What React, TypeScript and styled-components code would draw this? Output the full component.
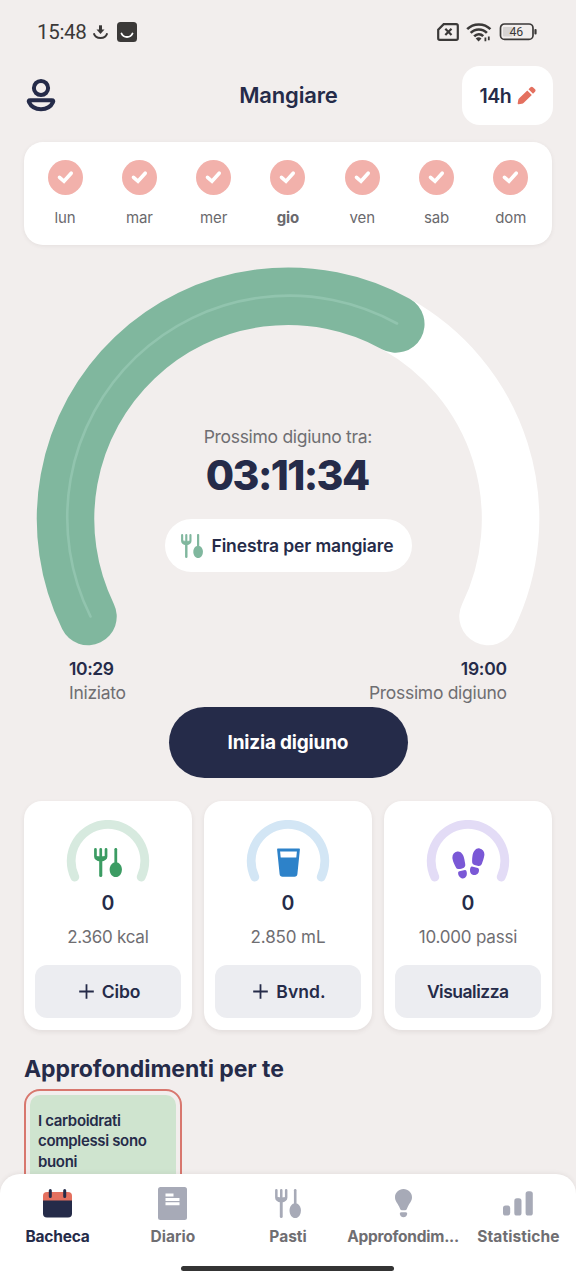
import React from 'react';
import styled, { createGlobalStyle } from 'styled-components';

const ink = '#252b49';
const muted = '#6f6e72';
const sand = '#f2eeed';

const GlobalStyle = createGlobalStyle`
  * { box-sizing: border-box; }
  body { margin: 0; background: ${sand}; font-family: Inter, "Open Sans", sans-serif; }
  svg { display: block; flex: none; }
`;

const Screen = styled.div`
  width: 576px;
  height: 1280px;
  display: flex;
  flex-direction: column;
  overflow: hidden;
  background: ${sand};
`;

const Text = styled.span<{ $size: number; $weight?: number; $color?: string; $track?: number; $line?: number }>`
  display: block;
  white-space: nowrap;
  font-size: ${p => p.$size}px;
  font-weight: ${p => p.$weight ?? 400};
  color: ${p => p.$color ?? ink};
  letter-spacing: ${p => p.$track ?? 0}px;
  margin-right: ${p => -(p.$track ?? 0)}px;
  line-height: ${p => p.$line ?? 24}px;
`;

const StatusBar = styled.div`
  flex: none;
  height: 64px;
  padding: 0 39px 0 37px;
  display: flex;
  align-items: center;
  justify-content: space-between;
`;
const StatusGroup = styled.div<{ $gap: number }>`
  display: flex;
  align-items: center;
  gap: ${p => p.$gap}px;
`;
const Clock = styled.span`
  font-family: Roboto, sans-serif;
  font-size: 20.5px;
  letter-spacing: -0.3px;
  color: #3b3938;
`;

const Header = styled.header`
  flex: none;
  height: 61px;
  padding: 2px 23px 0 26px;
  display: grid;
  grid-template-columns: 91px 1fr 91px;
  align-items: center;
`;
const ProfileButton = styled.div`
  margin-top: -1px;
`;
const Title = styled.h1`
  margin: 0 2px 2px 0;
  display: flex;
  justify-content: center;
`;
const GoalChip = styled.button`
  height: 59px;
  border: 0;
  padding: 0;
  border-radius: 18px;
  background: #fff;
  display: flex;
  align-items: center;
  justify-content: center;
  gap: 5px;
  font-family: inherit;
`;

const Content = styled.main`
  flex: 1;
  min-height: 0;
  overflow: hidden;
  padding: 17px 24px 0;
`;

const Week = styled.section`
  height: 103px;
  padding: 18px 4px 0;
  border-radius: 19px;
  background: #fff;
  box-shadow: 0 1px 4px rgba(80, 60, 60, 0.08);
  display: grid;
  grid-template-columns: repeat(7, 1fr);
`;
const Day = styled.div`
  display: flex;
  flex-direction: column;
  align-items: center;
  gap: 11px;
`;

const Gauge = styled.section`
  margin-top: 22px;
  height: 379px;
  display: grid;
  justify-items: center;
  > * { grid-area: 1 / 1; }
`;
const GaugeBody = styled.div`
  padding-top: 158px;
  display: flex;
  flex-direction: column;
  align-items: center;
`;
const WindowPill = styled.div`
  margin-top: 17px;
  width: 247px;
  height: 53px;
  padding-right: 2px;
  border-radius: 27px;
  background: #fff;
  display: flex;
  align-items: center;
  justify-content: center;
  gap: 9px;
`;

const Times = styled.div`
  display: flex;
  justify-content: space-between;
  padding: 11px 45px 0;
  height: 61px;
`;
const TimeBlock = styled.div<{ $end?: boolean }>`
  display: flex;
  flex-direction: column;
  align-items: ${p => (p.$end ? 'flex-end' : 'flex-start')};
`;

const StartButton = styled.button`
  display: flex;
  align-items: center;
  justify-content: center;
  margin: 0 auto;
  width: 239px;
  height: 71px;
  padding: 1px 0 0;
  border: 0;
  border-radius: 36px;
  background: ${ink};
  font-family: inherit;
`;

const Trackers = styled.section`
  margin-top: 23px;
  display: grid;
  grid-template-columns: repeat(3, 1fr);
  gap: 12px;
`;
const TrackerCard = styled.article`
  height: 229px;
  padding: 19px 11px 12px;
  border-radius: 18px;
  background: #fff;
  box-shadow: 0 2px 5px rgba(80, 60, 60, 0.09);
  display: flex;
  flex-direction: column;
  align-items: center;
`;
const TrackerDial = styled.div`
  display: grid;
  justify-items: center;
  height: 63px;
  margin-bottom: 8px;
  > * { grid-area: 1 / 1; }
`;
const DialIcon = styled.div`
  padding-top: 28px;
`;
const TrackerAction = styled.button<{ $offset: number }>`
  margin-top: auto;
  align-self: stretch;
  height: 53px;
  border: 0;
  padding: 0 0 0 ${p => p.$offset}px;
  border-radius: 12px;
  background: #ecedf1;
  display: flex;
  align-items: center;
  justify-content: center;
  gap: 8px;
  font-family: inherit;
`;

const SectionTitle = styled.h2`
  margin: 26px 0 0;
  display: flex;
`;
const StoryFrame = styled.article`
  margin-top: 7px;
  width: 158px;
  height: 200px;
  padding: 4px;
  border: 2px solid #d8776e;
  border-radius: 16px;
`;
const StoryCard = styled.div`
  height: 100%;
  padding: 16px 8px;
  border-radius: 10px;
  background: #cfe4cf;
`;

const BottomNav = styled.nav`
  flex: none;
  height: 106px;
  background: #fff;
  border-radius: 20px 20px 0 0;
  box-shadow: 0 -1px 4px rgba(80, 60, 60, 0.08);
  display: flex;
  flex-direction: column;
  align-items: center;
`;
const Tabs = styled.div`
  width: 100%;
  height: 92px;
  display: grid;
  grid-template-columns: repeat(5, 1fr);
`;
const Tab = styled.div`
  min-width: 0;
  display: flex;
  flex-direction: column;
  align-items: center;
`;
const TabIcon = styled.div`
  height: 51px;
  padding-top: 8px;
  display: flex;
  align-items: center;
`;
const HomeBar = styled.div`
  width: 213px;
  height: 5px;
  margin-right: 1px;
  border-radius: 3px;
  background: #343434;
`;

const Cutlery = ({ color, width, height }: { color: string; width: number; height: number }) => (
  <svg width={width} height={height} viewBox="0 0 27 29" preserveAspectRatio="none" fill="none" stroke={color} strokeLinecap="round">
    <path d="M1.4 1.3V8.5Q1.4 11.6 6.5 12.2Q11.6 11.6 11.6 8.5V1.3M6.5 1.3V12" strokeWidth="2.6" />
    <path d="M1.6 8.6Q2 11.5 6.5 11.7Q11 11.5 11.4 8.6L6.5 9Z" fill={color} strokeWidth="1" />
    <path d="M6.5 11V27.5" strokeWidth="3" />
    <path d="M21 1.3V17" strokeWidth="2.7" />
    <path d="M21 14.2C24.4 14.2 26.9 17.6 26.9 21.4C26.9 25.6 24.4 29 21 29C17.6 29 15.1 25.6 15.1 21.4C15.1 17.6 17.6 14.2 21 14.2Z" fill={color} stroke="none" />
  </svg>
);

const Glass = () => (
  <svg width="23" height="29" viewBox="0 0 23 29">
    <path fillRule="evenodd" fill="#2d82c9" d="M.8 .5H22.2Q23 .5 22.9 1.4L20.4 26Q20.1 28.8 17.5 28.8H5.5Q2.9 28.8 2.6 26L.1 1.4Q0 .5 .8 .5ZM3.1 3.6L3.7 9.4H19.3L19.9 3.6Z" />
  </svg>
);

const Footprints = () => (
  <svg width="33" height="31" viewBox="0 0 33 31" fill="#7a58d6">
    <path d="M5.2 3.6C8.6 2.9 11.6 6.3 12.3 11C12.8 14.2 13.5 16.3 13.2 17.8C12.9 19.5 11.4 20.2 9.3 20.7C7.1 21.2 5.3 21.5 4.1 19.7C2.8 17.3 1 13.8 .5 10.7C-.1 7 1.9 4.2 5.2 3.6Z" />
    <path d="M7.4 23.2L13 21.9C14.7 21.7 15.4 25.6 14.5 27.8C13.7 29.9 11.5 31 9.5 30.2C7.3 29.3 6 27.2 6.1 25C6.2 23.8 6.6 23.4 7.4 23.2Z" />
    <path d="M27.6 .4C30.9 1 32.9 3.9 32.3 7.6C31.8 10.7 30.9 13.1 29.8 16C28.9 17.8 27.6 18.2 25.5 17.7C22.6 17.1 20.7 16.8 20.3 15C20 13.3 20 11 20.5 7.8C21.2 3.2 24.2 -.3 27.6 .4Z" />
    <path d="M20 18.5L25.8 19.9C27.3 20.2 27.4 23.3 26.2 25C24.9 26.9 22.6 27.5 20.6 26.8C18.6 26.1 17.8 24 18 21.8C18.2 20 18.8 18.3 20 18.5Z" />
  </svg>
);

const CheckBadge = () => (
  <svg width="35" height="35" viewBox="0 0 35 35">
    <circle cx="17.5" cy="17.5" r="17.5" fill="#f2b1ab" />
    <path d="M11.5 17.3L16 21.3L23.2 13.2" fill="none" stroke="#fff" strokeWidth="3.6" strokeLinecap="round" />
  </svg>
);

const MiniDial = ({ color }: { color: string }) => (
  <svg width="84" height="63" viewBox="0 0 84 63">
    <path d="M8.8 57A36.8 36.8 0 1 1 75.2 57" fill="none" stroke={color} strokeWidth="8.8" strokeLinecap="round" />
  </svg>
);

const Plus = () => (
  <svg width="15" height="15" viewBox="0 0 15 15">
    <path d="M7.5 .2V14.8M.2 7.5H14.8" stroke={ink} strokeWidth="1.8" />
  </svg>
);

const Profile = () => (
  <svg width="30" height="34" viewBox="0 0 30 34" fill="none" stroke={ink} strokeWidth="4">
    <circle cx="15" cy="10" r="7.1" />
    <path d="M4.2 22.2H25.8Q28 22.2 27 24.2C25 28.6 20.4 31.2 15 31.2C9.6 31.2 5 28.6 3 24.2Q2 22.2 4.2 22.2Z" />
  </svg>
);

const Pencil = () => (
  <svg width="19" height="19" viewBox="0 0 19 19" fill="#e4705f">
    <path d="M10.3 4.4L14.8 8.9L6.8 16.8Q6 17.6 4.8 17.8L1.6 18.3Q.5 18.4 .7 17.3L1.2 14.2Q1.4 13 2.2 12.3Z" />
    <path d="M11.5 3.2L13.5 1.2Q14.7 .1 15.9 1.2L18 3.3Q19.1 4.5 18 5.7L16 7.7Z" />
  </svg>
);

const days = ['lun', 'mar', 'mer', 'gio', 'ven', 'sab', 'dom'];
const today = 'gio';

const trackers = [
  { goal: '2.360 kcal', track: -0.25, action: 'Cibo', actionTrack: -0.1, plus: true, ring: '#d7eadf', icon: <Cutlery color="#3c9c63" width={28} height={29} /> },
  { goal: '2.850 mL', track: -0.1, action: 'Bvnd.', actionTrack: 0.1, plus: true, ring: '#d3e6f5', icon: <Glass /> },
  { goal: '10.000 passi', track: -0.2, action: 'Visualizza', actionTrack: -0.5, plus: false, ring: '#e3dcf6', icon: <Footprints /> },
];

const grey = '#a7aab7';
const tabs = [
  {
    label: 'Bacheca', active: true, track: -0.2,
    icon: (
      <svg width="29" height="29" viewBox="0 0 29 29">
        <path d="M4 3H25Q29 3 29 7V12H0V7Q0 3 4 3Z" fill="#e4705f" />
        <path d="M0 11.5H29V24.5Q29 28.5 25 28.5H4Q0 28.5 0 24.5Z" fill={ink} />
        <path d="M7.3 1.5V7.5M21.7 1.5V7.5" stroke={ink} strokeWidth="3" strokeLinecap="round" />
      </svg>
    ),
  },
  {
    label: 'Diario', track: 0.05,
    icon: (
      <svg width="29" height="33" viewBox="0 0 29 33">
        <rect width="29" height="33" rx="2.5" fill={grey} />
        <path d="M7.5 8H15.5M7.5 12.4H21.5M7.5 16.8H21.5" stroke="#fff" strokeWidth="3" />
      </svg>
    ),
  },
  { label: 'Pasti', track: 0, icon: <Cutlery color={grey} width={26} height={29} /> },
  {
    label: 'Approfondim...', track: -0.25,
    icon: (
      <svg width="17" height="29" viewBox="0 0 17 29" fill={grey}>
        <path d="M8.5 0C13.3 0 17 3.7 17 8.3C17 12.2 14.2 14.6 12.9 17.5L11.7 20.2Q11.3 21.3 10 21.3H7Q5.7 21.3 5.3 20.2L4.1 17.5C2.8 14.6 0 12.2 0 8.3C0 3.7 3.7 0 8.5 0Z" />
        <path d="M6.2 23.2H10.8Q12.5 23.4 12.2 25Q11.3 28.3 8.5 28.3Q5.7 28.3 4.8 25Q4.5 23.4 6.2 23.2Z" />
      </svg>
    ),
  },
  {
    label: 'Statistiche', track: 0.1,
    icon: (
      <svg width="30" height="25" viewBox="0 0 30 25" fill={grey}>
        <rect y="14.5" width="7.2" height="10" rx="2.6" />
        <rect x="11.3" y="7.3" width="7.2" height="17.2" rx="2.6" />
        <rect x="22.6" y="0.3" width="7.2" height="24.2" rx="2.6" />
      </svg>
    ),
  },
];

export default function App() {
  return (
    <Screen>
      <GlobalStyle />
      <StatusBar>
        <StatusGroup $gap={6}>
          <Clock>15:48</Clock>
          <svg width="15" height="15" viewBox="0 0 15 15" fill="none" stroke="#3b3938">
            <path d="M7.5 .3V5" strokeWidth="3" />
            <path d="M3.5 4.6H11.5L7.5 9.1Z" fill="#3b3938" stroke="none" />
            <path d="M.8 8.2C2.5 14.6 12.5 14.6 14.2 8.2" strokeWidth="2" />
          </svg>
          <svg width="25" height="20" viewBox="0 0 25 20">
            <rect x="3" width="20" height="20" rx="3.5" fill="#3b3938" />
            <path d="M7.5 11.5C9.5 16.2 16.5 16.2 18.5 11.5" fill="none" stroke="#fff" strokeWidth="1.9" strokeLinecap="round" />
          </svg>
        </StatusGroup>
        <StatusGroup $gap={7}>
          <svg width="22" height="18" viewBox="0 0 22 18" fill="none" stroke="#3b3938">
            <path d="M6.7 1.2H19.2Q20.8 1.2 20.8 2.8V15.2Q20.8 16.8 19.2 16.8H2.8Q1.2 16.8 1.2 15.2V6.7Z" strokeWidth="2.2" />
            <path d="M8.3 5.8L14.5 12M14.5 5.8L8.3 12" strokeWidth="2.2" />
          </svg>
          <svg width="26" height="19" viewBox="0 0 26 19" fill="none" stroke="#3b3938" strokeWidth="2.5">
            <path d="M1.2 6.2C7.3 -.2 18.3 -.2 24.4 6.2" />
            <path d="M4.7 9.9C9 5.2 16.6 5.2 20.9 9.9" />
            <path d="M8.2 13.4C10.8 10.5 14.8 10.5 17.2 13.2" />
            <path d="M9.7 15.4Q12.7 13 15.5 15.4L12.6 18.4Z" fill="#3b3938" stroke="none" />
            <path d="M19.4 14.5V18.2M22.8 13.5V17.2" strokeWidth="1.8" />
          </svg>
          <svg width="38" height="18" viewBox="0 0 38 18">
            <rect x="4" y="4" width="9.5" height="9.5" rx="1" fill="#d6d3d2" />
            <rect x="1.5" y="1" width="32.5" height="15.4" rx="4" fill="none" stroke="#3b3938" strokeWidth="1.7" />
            <rect x="35.4" y="6" width="2.2" height="5.5" rx="1" fill="#3b3938" />
            <text x="17.3" y="13.2" textAnchor="middle" fontFamily="Roboto, sans-serif" fontSize="12.3" fill="#3b3938">46</text>
          </svg>
        </StatusGroup>
      </StatusBar>

      <Header>
        <ProfileButton><Profile /></ProfileButton>
        <Title><Text $size={22} $weight={600} $track={-0.15}>Mangiare</Text></Title>
        <GoalChip>
          <Text $size={19.5} $weight={600} $track={-0.5}>14h</Text>
          <Pencil />
        </GoalChip>
      </Header>

      <Content>
        <Week>
          {days.map(day => (
            <Day key={day}>
              <CheckBadge />
              <Text $size={15} $weight={day === today ? 700 : 400} $track={-0.1} $color="#6a696d">{day}</Text>
            </Day>
          ))}
        </Week>

        <Gauge>
          <svg width="504" height="379" viewBox="36.5 267 504 379" fill="none" strokeLinecap="round" strokeWidth="57.5">
            <path d="M396.3 324A222.7 222.7 0 0 1 488.5 616.5" stroke="#fff" />
            <path d="M88.5 616.5A222.7 222.7 0 0 1 396.3 324" stroke="#80b79e" />
            <path d="M91 616.5A222 222 0 0 1 397.5 323.5" stroke="#91c4ae" strokeWidth="2.6" />
          </svg>
          <GaugeBody>
            <Text $size={17.5} $color={muted} $track={-0.3}>Prossimo digiuno tra:</Text>
            <Text $size={41} $weight={800} $line={53} $track={-1.6}>03:11:34</Text>
            <WindowPill>
              <Cutlery color="#80b79e" width={22} height={24} />
              <Text $size={17.5} $weight={600} $track={-0.13}>Finestra per mangiare</Text>
            </WindowPill>
          </GaugeBody>
        </Gauge>

        <Times>
          <TimeBlock>
            <Text $size={17.5} $weight={600} $track={-0.4}>10:29</Text>
            <Text $size={17.5} $color={muted} $track={-0.3}>Iniziato</Text>
          </TimeBlock>
          <TimeBlock $end>
            <Text $size={17.5} $weight={600} $track={-0.25}>19:00</Text>
            <Text $size={17.5} $color={muted} $track={-0.3}>Prossimo digiuno</Text>
          </TimeBlock>
        </Times>

        <StartButton>
          <Text $size={19} $weight={700} $color="#fff" $track={-0.2}>Inizia digiuno</Text>
        </StartButton>

        <Trackers>
          {trackers.map(t => (
            <TrackerCard key={t.action}>
              <TrackerDial>
                <MiniDial color={t.ring} />
                <DialIcon>{t.icon}</DialIcon>
              </TrackerDial>
              <Text $size={19.5} $weight={600}>0</Text>
              <Text $size={17} $color={muted} $track={t.track} $line={44}>{t.goal}</Text>
              <TrackerAction $offset={t.plus ? 3 : 0}>
                {t.plus && <Plus />}
                <Text $size={17.5} $weight={600} $track={t.actionTrack}>{t.action}</Text>
              </TrackerAction>
            </TrackerCard>
          ))}
        </Trackers>

        <SectionTitle><Text $size={23} $weight={700} $track={-0.05} $line={26}>Approfondimenti per te</Text></SectionTitle>
        <StoryFrame>
          <StoryCard>
            <Text $size={15} $weight={600} $track={-0.35} $line={20.3}>
              I carboidrati<br />complessi sono<br />buoni
            </Text>
          </StoryCard>
        </StoryFrame>
      </Content>

      <BottomNav>
        <Tabs>
          {tabs.map(tab => (
            <Tab key={tab.label}>
              <TabIcon>{tab.icon}</TabIcon>
              <Text $size={15.5} $weight={700} $track={tab.track} $color={tab.active ? ink : muted}>{tab.label}</Text>
            </Tab>
          ))}
        </Tabs>
        <HomeBar />
      </BottomNav>
    </Screen>
  );
}
